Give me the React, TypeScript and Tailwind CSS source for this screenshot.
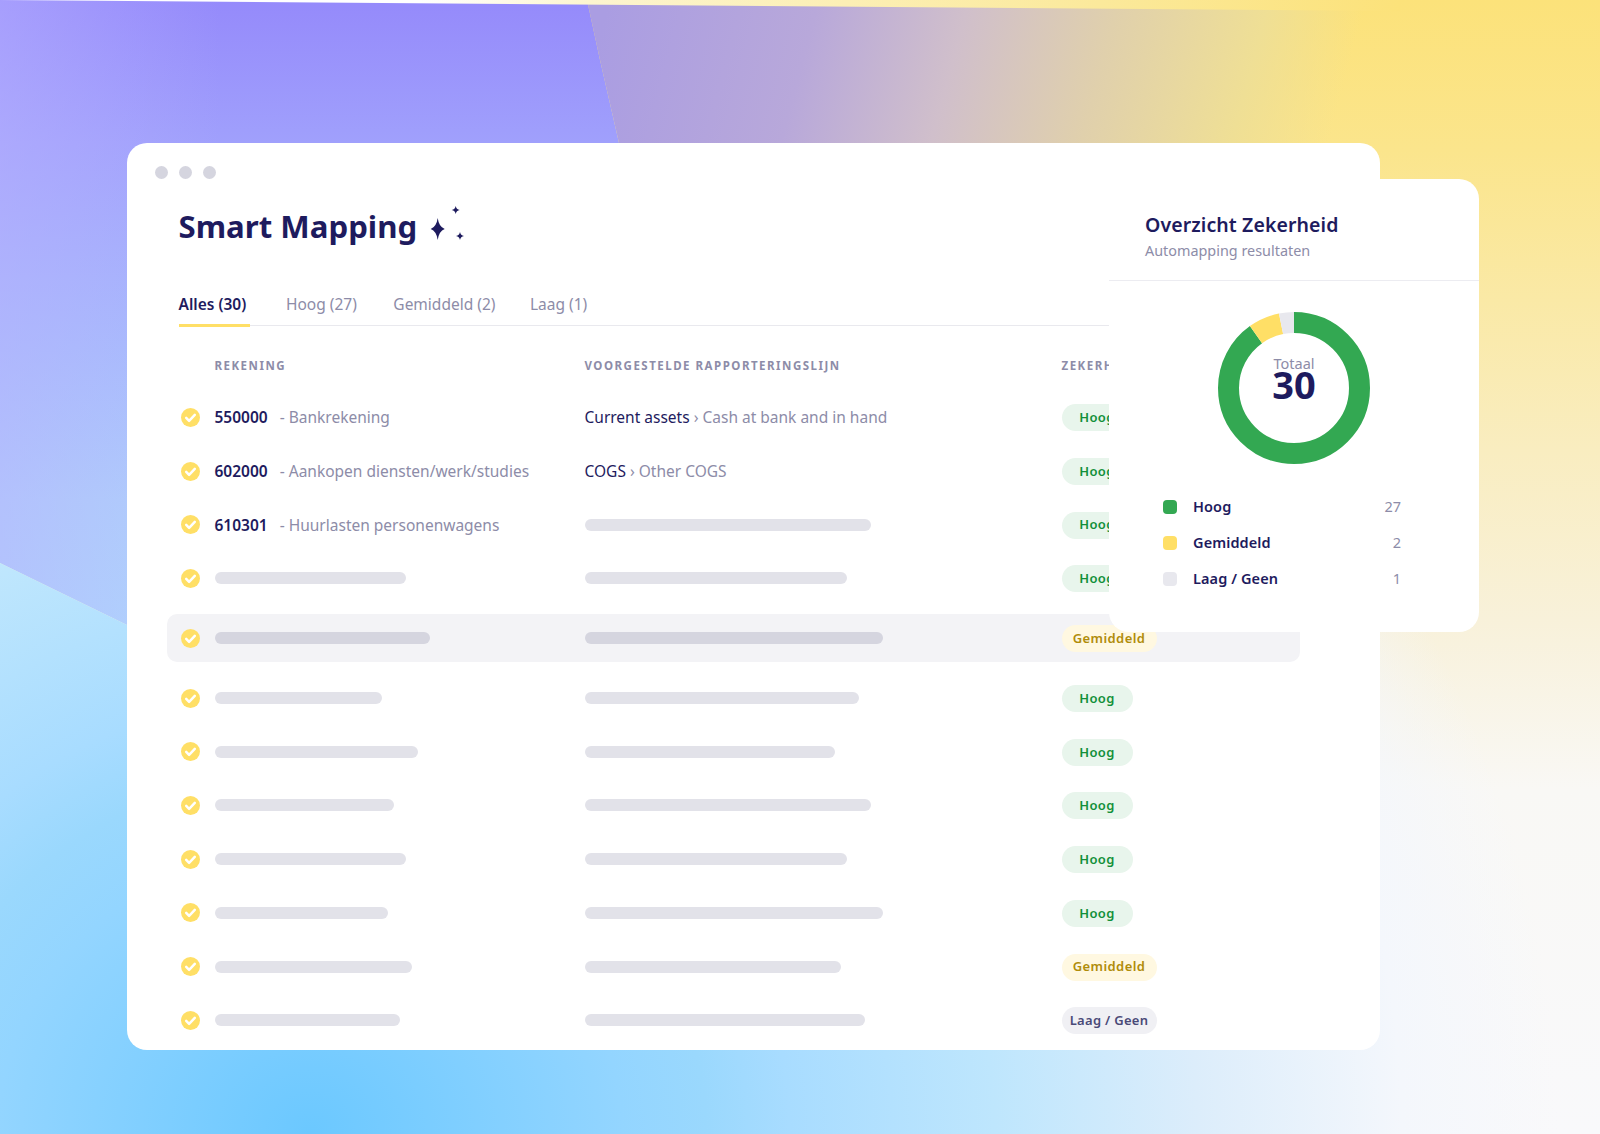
import React from "react";

type Level = "hoog" | "gem" | "laag";
type Row = { a: string; b: string; level: Level; code?: string; name?: string; c1?: string; c2?: string; active?: boolean };

const rows: Row[] = [
  { a: "", b: "", level: "hoog", code: "550000", name: "- Bankrekening", c1: "Current assets", c2: "Cash at bank and in hand" },
  { a: "", b: "", level: "hoog", code: "602000", name: "- Aankopen diensten/werk/studies", c1: "COGS", c2: "Other COGS" },
  { a: "", b: "w-[286px]", level: "hoog", code: "610301", name: "- Huurlasten personenwagens" },
  { a: "w-[191px]", b: "w-[262px]", level: "hoog" },
  { a: "w-[215px]", b: "w-[298px]", level: "gem", active: true },
  { a: "w-[167px]", b: "w-[274px]", level: "hoog" },
  { a: "w-[203px]", b: "w-[250px]", level: "hoog" },
  { a: "w-[179px]", b: "w-[286px]", level: "hoog" },
  { a: "w-[191px]", b: "w-[262px]", level: "hoog" },
  { a: "w-[173px]", b: "w-[298px]", level: "hoog" },
  { a: "w-[197px]", b: "w-[256px]", level: "gem" },
  { a: "w-[185px]", b: "w-[280px]", level: "laag" },
];

function Check() {
  return (
    <svg viewBox="0 0 19 19" className="ml-[2px] h-[19px] w-[19px]">
      <circle cx="9.5" cy="9.5" r="9.5" fill="#ffdf66" />
      <path d="M5.2 9.9l2.9 2.9 5.7-5.9" fill="none" stroke="#fff" strokeWidth="2.5" strokeLinecap="round" strokeLinejoin="round" />
    </svg>
  );
}

function Badge({ level }: { level: Level }) {
  if (level === "hoog")
    return <span className="mt-[1px] flex h-[27px] w-[71px] items-center justify-center rounded-full bg-[#e8f5ec] text-[13px] font-semibold tracking-[0.4px] text-[#12903a]">Hoog</span>;
  if (level === "gem")
    return <span className="mt-[1px] flex h-[27px] w-[95px] items-center justify-center rounded-full bg-[#fff8e1] text-[13px] font-semibold tracking-[0.4px] text-[#b08c0a]">Gemiddeld</span>;
  return <span className="mt-[1px] flex h-[27px] w-[95px] items-center justify-center rounded-full bg-[#f0f0f4] text-[13px] font-semibold tracking-[0.3px] text-[#4a4a78]">Laag / Geen</span>;
}

function Sparkles() {
  return (
    <svg viewBox="0 0 36 44" className="ml-[13px] h-[44px] w-[36px] shrink-0" fill="#1e1b5e">
      <path d="M7.7 14Q8.9 22.8 14.7 25Q8.9 27.2 7.7 36Q6.5 27.2 0.7 25Q6.5 22.8 7.7 14Z" />
      <path d="M25.7 2Q26.3 5.4 29.7 6Q26.3 6.6 25.7 10Q25.1 6.6 21.7 6Q25.1 5.4 25.7 2Z" />
      <path d="M30 28Q30.6 31.4 34 32Q30.6 32.6 30 36Q29.4 32.6 26 32Q29.4 31.4 30 28Z" />
    </svg>
  );
}

function Donut() {
  const r = 65.5;
  const c = 2 * Math.PI * r;
  const seg = (from: number, to: number, color: string) => (
    <circle
      cx="76"
      cy="76"
      r={r}
      fill="none"
      stroke={color}
      strokeWidth="21"
      strokeDasharray={`${(c * (to - from)) / 360} ${c}`}
      strokeDashoffset={(-c * from) / 360}
      transform="rotate(-90 76 76)"
    />
  );
  return (
    <svg viewBox="0 0 152 152" className="h-[152px] w-[152px]">
      {seg(0, 324, "#33a852")}
      {seg(324, 348, "#ffdf66")}
      {seg(348, 360, "#e8e8ee")}
    </svg>
  );
}

function Legend({ swatch, label, n }: { swatch: string; label: string; n: string }) {
  return (
    <div className="flex h-[35.7px] items-center">
      <span className={`h-[14px] w-[14px] rounded-[4px] ${swatch}`} />
      <span className="ml-[16px] text-[14.5px] font-semibold tracking-[0.1px] text-[#1e1b5e]">{label}</span>
      <span className="ml-auto text-[14.5px] text-[#8d8ca8]">{n}</span>
    </div>
  );
}

export default function App() {
  return (
    <div className="relative h-[1134px] w-[1600px] overflow-hidden bg-[linear-gradient(180deg,#fce27a_0px,#fbe58c_150px,#f9edc0_450px,#f8f1da_620px,#f9f8f5_790px,#f9f9fb_1134px)] pl-[127px] pt-[143px] font-['Noto_Sans',sans-serif]">
      {/* backdrop shapes */}
      <div className="absolute inset-0 bg-[linear-gradient(105deg,#aa9de2_588px,#b8a8da_791px,#d0bfcb_936px,#e0d0ac_1081px,#efdf95_1226px,#fbe58c00_1320px)] [clip-path:polygon(587px_0,600px_60px,619px_143px,630px_300px,1400px_300px,1400px_0)]" />
      <div className="absolute inset-0 bg-[linear-gradient(90deg,#b8b2ff80_0px,#b8b2ff00_220px),linear-gradient(180deg,#958afb_0px,#a0a0fc_143px,#a6bcfc_350px,#aed0fb_500px,#aed6fc_625px)] [clip-path:polygon(0_0,587px_0,600px_60px,619px_143px,640px_700px,127px_625px,0_563px)]" />
      <div className="absolute inset-0 bg-[radial-gradient(1200px_1100px_at_310px_1134px,#6bc8ff_0%,#93d5ff_26%,#9ad8fd_33%,#a8dcff_40%,#bee6fd_57%,#dcedfb_74%,#f4f7fc_91%,#f9f9fb00_104%)] [clip-path:polygon(0_563px,127px_625px,1600px_625px,1600px_1134px,0_1134px)]" />
      <div className="absolute inset-0 bg-[linear-gradient(90deg,#ffffff_0px,#ffffff_420px,#fdf5cf_590px,#fbe99b_1100px,#fce27a_1400px)] [clip-path:polygon(0_0,1400px_11px,1400px_0)]" />

      {/* main window */}
      <div className="relative flex h-[907px] w-[1253px] flex-col rounded-[20px] bg-white pl-[39.5px]">
        <div className="ml-[-16px] mt-[23px] flex gap-[11px] pl-[4px]">
          <span className="h-[13px] w-[13px] rounded-full bg-[#d5d5df]" />
          <span className="h-[13px] w-[13px] rounded-full bg-[#d5d5df]" />
          <span className="h-[13px] w-[13px] rounded-full bg-[#d5d5df]" />
        </div>

        <div className="ml-[12px] mt-[27px] flex h-[40px] items-center">
          <h1 className="text-[31.2px] font-bold leading-[40px] text-[#1e1b5e]">Smart Mapping</h1>
          <Sparkles />
        </div>

        <div className="ml-[12px] mt-[37px] flex h-[43px] w-[1100px] gap-[36.5px] border-b border-[#e9e9ee] text-[15.5px]">
          <span className="-mb-[2px] flex h-[44px] w-[71px] items-center border-b-[3px] border-[#ffdf66] pt-[2px] font-semibold text-[#1e1b5e]">Alles (30)</span>
          <span className="-mb-[2px] flex h-[44px] items-center border-b-[3px] border-transparent pt-[2px] text-[#8d8ca8]">Hoog (27)</span>
          <span className="-mb-[2px] flex h-[44px] items-center border-b-[3px] border-transparent pt-[2px] text-[#8d8ca8]">Gemiddeld (2)</span>
          <span className="-mb-[2px] -ml-[2px] flex h-[44px] items-center border-b-[3px] border-transparent pt-[2px] text-[#8d8ca8]">Laag (1)</span>
        </div>

        <div className="ml-[12px] mt-[28px] flex h-[24px] items-center text-[11.5px] font-bold tracking-[1.5px] text-[#8d8ca8]">
          <span className="w-[36px]" />
          <span className="w-[370px]">REKENING</span>
          <span className="w-[477px]">VOORGESTELDE RAPPORTERINGSLIJN</span>
          <span>ZEKERHEID</span>
        </div>

        <div className="mt-[12.5px] flex flex-col">
          {rows.map((r, i) => (
            <div
              key={i}
              className={r.active ? "my-[9px] flex h-[48px] w-[1133px] items-center rounded-[10px] bg-[#f3f3f6] pl-[12px]" : "flex h-[53.7px] w-[1133px] items-center pl-[12px]"}
            >
              <span className="w-[36px]">
                <Check />
              </span>
              <div className="flex w-[370px] items-center text-[15.5px]">
                {r.code ? (
                  <div className="flex pt-[1px]">
                    <span className="font-semibold text-[#1e1b5e]">{r.code}</span>
                    <span className="ml-[12px] text-[#8d8ca8]">{r.name}</span>
                  </div>
                ) : (
                  <span className={`h-3 rounded-full ${r.a} ${r.active ? "bg-[#d5d5df]" : "bg-[#e2e2e9]"}`} />
                )}
              </div>
              <div className="flex w-[477px] items-center text-[15.5px]">
                {r.c1 ? (
                  <div className="flex pt-[1px]">
                    <span className="text-[#1e1b5e]">{r.c1}</span>
                    <span className="ml-[4px] text-[#8d8ca8]">› {r.c2}</span>
                  </div>
                ) : (
                  <span className={`h-3 rounded-full ${r.b} ${r.active ? "bg-[#d5d5df]" : "bg-[#e2e2e9]"}`} />
                )}
              </div>
              <Badge level={r.level} />
            </div>
          ))}
        </div>
      </div>

      {/* overview card */}
      <div className="absolute left-[1109px] top-[179px] h-[453px] w-[370px] rounded-[20px] bg-white">
        <div className="flex h-[102px] flex-col border-b border-[#ececf1] pl-[36px] pt-[31px]">
          <h2 className="text-[19.5px] font-semibold leading-[30px] tracking-[0.1px] text-[#1e1b5e]">Overzicht Zekerheid</h2>
          <p className="text-[14.4px] leading-[22px] text-[#8d8ca8]">Automapping resultaten</p>
        </div>
        <div className="mt-[31px] flex justify-center">
          <div className="relative h-[152px] w-[152px]">
            <Donut />
            <div className="absolute inset-0 flex flex-col items-center pt-[43px]">
              <span className="text-[14.5px] leading-[16px] text-[#8d8ca8]">Totaal</span>
              <span className="text-[38px] font-bold leading-[26px] text-[#1e1b5e]">30</span>
            </div>
          </div>
        </div>
        <div className="ml-[54px] mr-[78px] mt-[25.5px] flex flex-col">
          <Legend swatch="bg-[#33a852]" label="Hoog" n="27" />
          <Legend swatch="bg-[#ffdf66]" label="Gemiddeld" n="2" />
          <Legend swatch="bg-[#e8e8ee]" label="Laag / Geen" n="1" />
        </div>
      </div>
    </div>
  );
}
